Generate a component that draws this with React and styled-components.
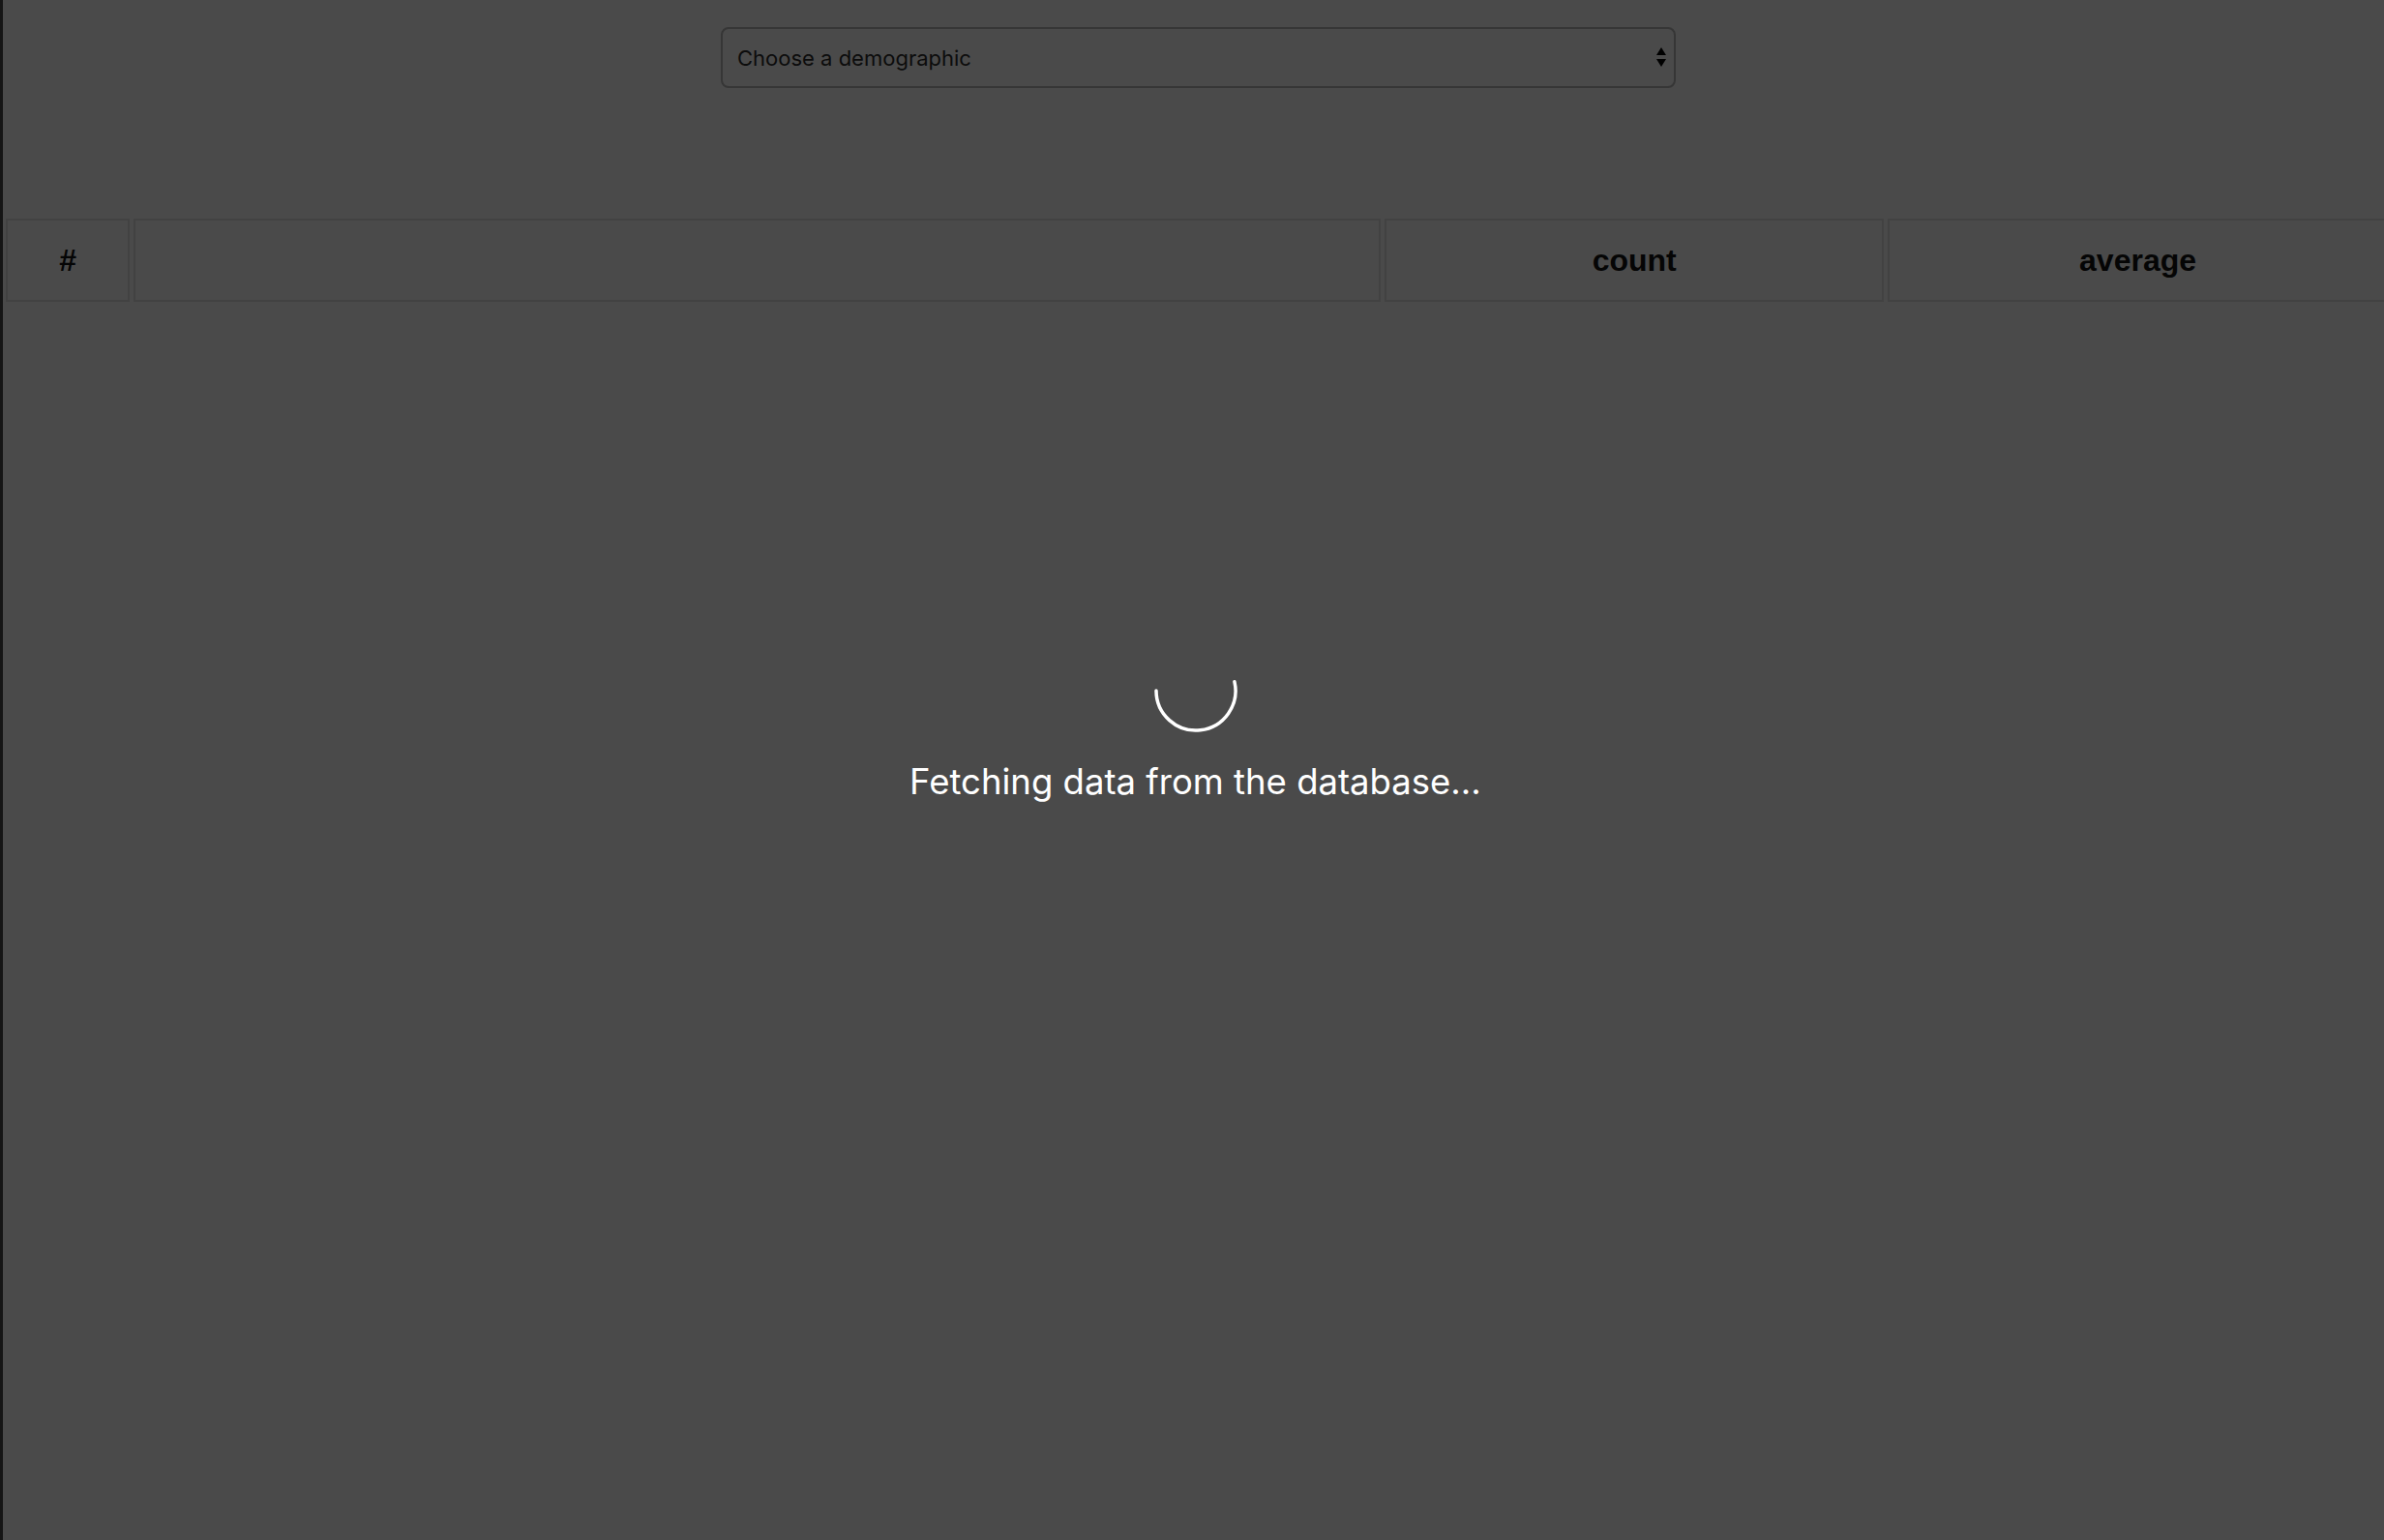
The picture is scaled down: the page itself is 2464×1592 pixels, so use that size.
import React from "react";
import styled, { createGlobalStyle } from "styled-components";

const Global = createGlobalStyle`
  html, body {
    margin: 0;
    padding: 0;
    background: #4a4a4a;
    overflow: hidden;
  }
  * { box-sizing: border-box; }
`;

const Page = styled.div`
  min-height: 1592px;
  background: #4a4a4a;
  border-left: 3px solid #151515;
  display: flex;
  flex-direction: column;
  overflow: hidden;
`;

const SelectBar = styled.div`
  display: flex;
  justify-content: center;
  padding-top: 28px;
  padding-left: 10px;
`;

const SelectWrap = styled.div`
  position: relative;
  width: 987px;
`;

const Select = styled.select`
  appearance: none;
  -webkit-appearance: none;
  width: 100%;
  height: 63px;
  background: #4a4a4a;
  border: 2px solid #363636;
  border-radius: 8px;
  padding: 0 40px 0 15px;
  font-family: Inter, "Liberation Sans", sans-serif;
  font-size: 22px;
  color: #0c0c0c;
  outline: none;
`;

const Arrows = styled.svg`
  position: absolute;
  right: 9px;
  top: 21px;
  pointer-events: none;
`;

const Table = styled.table`
  margin-top: 131px;
  margin-left: -1px;
  border-spacing: 4px;
  table-layout: fixed;
  width: 2470px;
  flex: none;
`;

const Th = styled.th`
  width: ${(p) => p.$w}px;
  height: 86px;
  border: 2px solid #424242;
  padding: 0;
  font-family: "Liberation Sans", Arial, sans-serif;
  font-weight: 700;
  font-size: 32px;
  color: #050505;
  text-align: center;
  vertical-align: middle;
`;

const Loading = styled.div`
  display: flex;
  flex-direction: column;
  align-items: center;
  margin-top: 353px;
  margin-left: 4px;
`;

const Message = styled.div`
  margin-top: 27px;
  font-family: Inter, "Liberation Sans", sans-serif;
  font-weight: 400;
  font-size: 36.5px;
  color: #ffffff;
`;

function Spinner() {
  return (
    <svg width="90" height="90" viewBox="0 0 90 90">
      <path
        d="M4 45 A41 41 0 1 0 84.95 35.78"
        fill="none"
        stroke="#ffffff"
        strokeWidth="3.5"
        strokeLinecap="round"
      />
    </svg>
  );
}

export default function App() {
  return (
    <>
      <Global />
      <Page>
        <SelectBar>
          <SelectWrap>
            <Select defaultValue="">
              <option value="">Choose a demographic</option>
            </Select>
            <Arrows width="12" height="21" viewBox="0 0 12 21">
              <path d="M6 0 L11 8 L1 8 Z" fill="#000" />
              <path d="M1 12 L11 12 L6 20 Z" fill="#000" />
            </Arrows>
          </SelectWrap>
        </SelectBar>
        <Table>
          <thead>
            <tr>
              <Th $w={128}>#</Th>
              <Th $w={1287}></Th>
              <Th $w={515}>count</Th>
              <Th $w={516}>average</Th>
            </tr>
          </thead>
        </Table>
        <Loading>
          <Spinner />
          <Message>Fetching data from the database...</Message>
        </Loading>
      </Page>
    </>
  );
}
